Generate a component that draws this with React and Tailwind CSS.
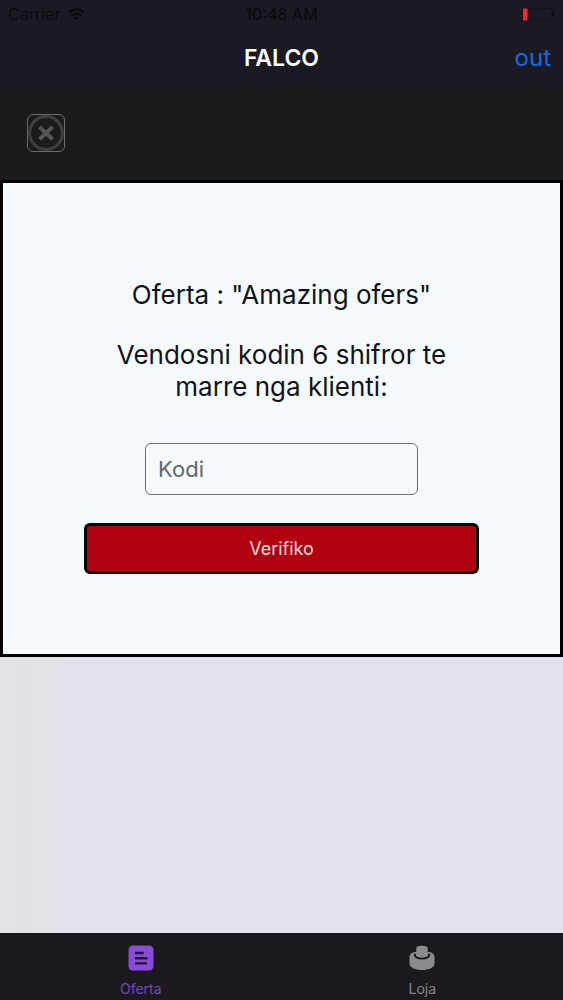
import React, { useState } from 'react';

const WifiIcon = () => (
  <svg width="17" height="13" viewBox="0 0 17 13" fill="none" stroke="currentColor" strokeWidth="2" aria-hidden="true">
    <path d="M1 4.6C5.2 0.4 11.8 0.4 16 4.6" />
    <path d="M3.8 7.6C6.4 5 10.6 5 13.2 7.6" />
    <path d="M8.5 12.4L5.9 9.7C7.3 8.3 9.7 8.3 11.1 9.7Z" fill="currentColor" stroke="none" />
  </svg>
);

const BatteryIcon = () => (
  <svg width="33" height="13" viewBox="0 0 33 13" aria-hidden="true">
    <rect x="0.5" y="0.5" width="29" height="12" rx="2" fill="none" stroke="#121117" />
    <rect x="1" y="0.5" width="4.5" height="12" rx="1" fill="#f02e30" />
    <path d="M30.5 4H31.5C33 5 33 8 31.5 9H30.5Z" fill="#0a090d" />
  </svg>
);

const CloseIcon = () => (
  <svg width="36" height="36" viewBox="0 0 36 36" fill="none" aria-hidden="true">
    <circle cx="18" cy="18" r="16.4" stroke="#3f3f3f" strokeWidth="3" />
    <path d="M13 13.4L23 22.8M23 13.4L13 22.8" stroke="#555" strokeWidth="4" strokeLinecap="square" />
  </svg>
);

const OfertaIcon = () => (
  <svg width="26" height="26" viewBox="0 0 26 26" aria-hidden="true">
    <rect x="0.5" y="0.5" width="25" height="25" rx="4.5" fill="#8a4bd6" />
    <path d="M7 8H15.5M7 13.2H19.5M7 18.4H19" stroke="#24133a" strokeWidth="2.4" />
  </svg>
);

const LojaIcon = () => (
  <svg width="26" height="26" viewBox="0 0 26 26" aria-hidden="true">
    <path d="M0.5 12C0.5 9 3 7.5 6 7H20C23 7.5 25.5 9 25.5 12V18.5C25.5 22.5 20 25 13 25S0.5 22.5 0.5 18.5Z" fill="#8b8a8e" />
    <path d="M6 8.8C4 15.2 22 15.2 20 8.8" fill="none" stroke="#1b191f" strokeWidth="2" />
    <path d="M7.3 3C7.3 0 18.7 0 18.7 3V10.5C18.7 13 7.3 13 7.3 10.5Z" fill="#8b8a8e" />
  </svg>
);

const tabs = [
  { id: 'oferta', label: 'Oferta', icon: OfertaIcon },
  { id: 'loja', label: 'Loja', icon: LojaIcon },
];

export default function App() {
  const [code, setCode] = useState('');
  const [activeTab, setActiveTab] = useState('oferta');

  return (
    <div className="flex min-h-screen flex-col bg-[#e4e1ea] bg-linear-to-r from-[#e3e2e5] to-[#e5e1ec] to-15% font-[Inter,'Liberation_Sans',sans-serif]">
      <header className="bg-[#1b1922]">
        <div className="grid h-7 grid-cols-3 items-center px-2 text-base text-[#0a090d]">
          <div className="flex items-center gap-2">
            <span>Carrier</span>
            <WifiIcon />
          </div>
          <span className="text-center font-medium whitespace-nowrap">10:48 AM</span>
          <div className="flex justify-end">
            <BatteryIcon />
          </div>
        </div>
        <div className="grid h-15 grid-cols-3 items-center px-3">
          <h1 className="col-start-2 text-center text-[23px] font-semibold text-white">FALCO</h1>
          <button type="button" className="justify-self-end text-2xl text-[#1769e0]">out</button>
        </div>
      </header>

      <div className="bg-[#1b1b1b] px-[27px] pt-[26px] pb-7">
        <button
          type="button"
          aria-label="Mbyll"
          className="flex size-[38px] items-center justify-center rounded-md border border-[#6b6b6b]"
        >
          <CloseIcon />
        </button>
      </div>

      <main className="flex flex-col items-center border-3 border-black bg-[#f5faff] pt-24 pb-20 text-center text-[26px] leading-8 text-[#101214]">
        <p>Oferta : "Amazing ofers"</p>
        <form className="mt-7 flex w-[71%] flex-col items-center" onSubmit={(e) => e.preventDefault()}>
          <label htmlFor="kodi" className="px-6">
            Vendosni kodin 6 shifror te marre nga klienti:
          </label>
          <input
            id="kodi"
            type="text"
            placeholder="Kodi"
            value={code}
            onChange={(e) => setCode(e.target.value)}
            className="mt-10 h-13 w-[69%] rounded-md border border-[#6c7075] px-3 text-[22px] placeholder:text-[#63676b]"
          />
          <button
            type="submit"
            className="mt-7 h-[51px] w-full rounded-md border-3 border-black bg-[#b00010] text-lg text-[#f3dcdc]"
          >
            Verifiko
          </button>
        </form>
      </main>

      <nav className="mt-auto flex h-[67px] bg-[#1b191f]">
        {tabs.map(({ id, label, icon: Icon }) => (
          <button
            key={id}
            type="button"
            onClick={() => setActiveTab(id)}
            className={`flex flex-1 flex-col items-center gap-2 pt-3 text-sm ${
              activeTab === id ? 'text-[#6f4bb0]' : 'text-[#88878b]'
            }`}
          >
            <Icon />
            {label}
          </button>
        ))}
      </nav>
    </div>
  );
}
